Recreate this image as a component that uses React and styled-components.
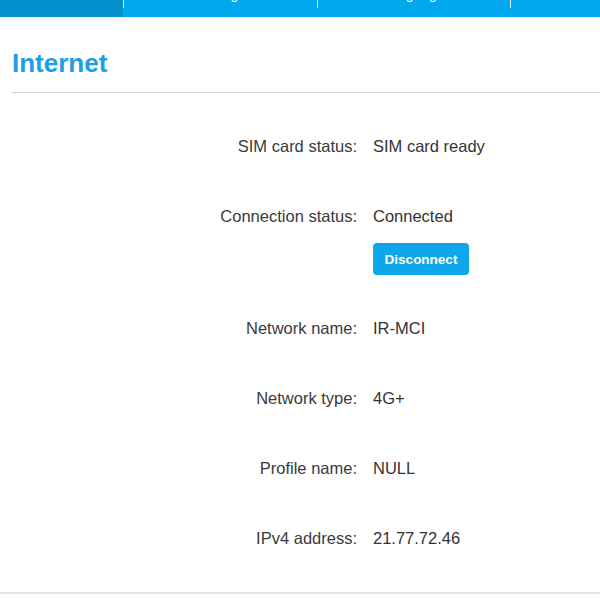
import React from "react";
import styled, { createGlobalStyle } from "styled-components";

const GlobalStyle = createGlobalStyle`
  html, body {
    margin: 0;
    padding: 0;
    background: #ffffff;
  }
  body {
    font-family: "Liberation Sans", Arial, sans-serif;
    color: #333333;
  }
`;

const tabs = [
  { label: "Home", width: "123px", active: true },
  { label: "Settings", width: "194px" },
  { label: "Language", width: "193px" },
  { label: "Advanced", width: "auto" },
];

const rows = [
  { label: "SIM card status:", value: "SIM card ready" },
  { label: "Connection status:", value: "Connected", action: "Disconnect" },
  { label: "Network name:", value: "IR-MCI" },
  { label: "Network type:", value: "4G+" },
  { label: "Profile name:", value: "NULL" },
  { label: "IPv4 address:", value: "21.77.72.46" },
];

const App = () => {
  return (
    <>
      <GlobalStyle />
      <Page>
        <NavClip>
          <NavBar>
            {tabs.map((tab, i) => (
              <Tab key={tab.label} $width={tab.width} $active={tab.active}>
                {i > 0 && <TabDivider />}
                <TabLabel>{tab.label}</TabLabel>
              </Tab>
            ))}
          </NavBar>
        </NavClip>

        <Header>
          <Title>Internet</Title>
        </Header>

        <InfoList>
          {rows.map((row) => (
            <InfoRow key={row.label}>
              <Label>{row.label}</Label>
              <ValueStack>
                <Value>{row.value}</Value>
                {row.action && <ActionButton>{row.action}</ActionButton>}
              </ValueStack>
            </InfoRow>
          ))}
        </InfoList>
      </Page>
    </>
  );
};

export default App;

const Page = styled.div`
  width: 600px;
  height: 600px;
  overflow: hidden;
  display: flex;
  flex-direction: column;
`;

const NavClip = styled.div`
  height: 17px;
  overflow: hidden;
  flex-shrink: 0;
`;

const NavBar = styled.div`
  display: flex;
  height: 47px;
  margin-top: -30px;
  background-color: #00a9ee;
`;

const Tab = styled.div`
  position: relative;
  width: ${(p) => p.$width};
  flex: ${(p) => (p.$width === "auto" ? 1 : "none")};
  display: flex;
  justify-content: center;
  background-color: ${(p) => (p.$active ? "#0392cd" : "transparent")};
`;

const TabDivider = styled.span`
  position: absolute;
  left: 0;
  top: 22px;
  width: 1px;
  height: 16px;
  background-color: rgba(255, 255, 255, 0.85);
`;

const TabLabel = styled.span`
  font-size: 14px;
  line-height: 16px;
  padding-top: 16px;
  color: #ffffff;
`;

const Header = styled.div`
  margin: 31px 0 0 12px;
  padding-bottom: 14px;
  border-bottom: 1px solid #d2d2d2;
`;

const Title = styled.h1`
  margin: 0;
  font-size: 26px;
  line-height: 30px;
  font-weight: 700;
  color: #1c9fe5;
`;

const InfoList = styled.div`
  display: flex;
  flex-direction: column;
  gap: 43px;
  padding: 43px 0 37px;
  border-bottom: 2px solid #e2e2e2;
`;

const InfoRow = styled.div`
  display: grid;
  grid-template-columns: 357px 1fr;
  column-gap: 16px;
  min-height: 27px;
  font-size: 16.5px;
  line-height: 20px;
`;

const Label = styled.div`
  text-align: right;
  color: #3a3a3a;
`;

const ValueStack = styled.div`
  display: flex;
  flex-direction: column;
  align-items: flex-start;
`;

const Value = styled.div`
  color: #333333;
`;

const ActionButton = styled.button`
  margin-top: 17px;
  width: 96px;
  height: 32px;
  border: none;
  border-radius: 4px;
  background-color: #0ea7ea;
  color: #ffffff;
  font-family: "Liberation Sans", Arial, sans-serif;
  font-size: 13.5px;
  font-weight: 700;
  padding: 0;
  cursor: pointer;
`;
